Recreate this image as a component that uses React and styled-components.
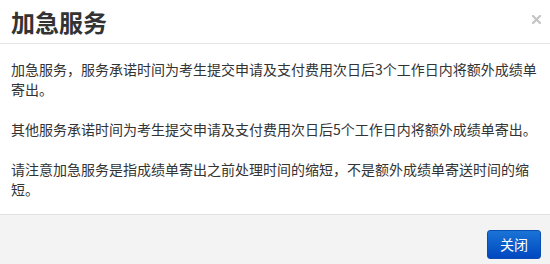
import React from 'react';
import styled, { createGlobalStyle } from 'styled-components';

const GlobalStyle = createGlobalStyle`
  html, body {
    margin: 0;
    padding: 0;
    background: #fff;
  }
  body {
    font-family: "Noto Sans CJK SC", "Liberation Sans", sans-serif;
    color: #333;
  }
`;

const Modal = styled.div`
  width: 550px;
  height: 264px;
  display: flex;
  flex-direction: column;
  overflow: hidden;
  background: #fff;
`;

const Header = styled.div`
  height: 43px;
  display: flex;
  align-items: center;
  justify-content: space-between;
  padding: 0 9px 0 11px;
  border-bottom: 1px solid #e5e5e5;
  box-sizing: content-box;
`;

const Title = styled.h3`
  margin: 0;
  font-size: 24px;
  font-weight: 700;
  line-height: 1;
  color: #333;
`;

const Close = styled.button`
  border: 0;
  background: none;
  padding: 0;
  margin-top: -4px;
  width: 10px;
  height: 10px;
  cursor: pointer;
  display: flex;
  align-items: center;
  justify-content: center;
`;

const Body = styled.div`
  padding: 15px 9px 15px 11px;
  font-size: 14px;
  line-height: 20px;
  color: #333;
`;

const Paragraph = styled.p`
  margin: 0;
  & + & {
    margin-top: 20px;
  }
`;

const Footer = styled.div`
  flex: 1;
  display: flex;
  justify-content: flex-end;
  align-items: flex-start;
  padding: 15px 9px 0 11px;
  background: #f3f3f3;
  border-top: 1px solid #e0e0e0;
`;

const Button = styled.button`
  height: 29px;
  padding: 0 12px;
  font-family: inherit;
  font-size: 14px;
  line-height: 27px;
  color: #fff;
  border: 1px solid #0a4db3;
  border-radius: 3px;
  background: linear-gradient(to bottom, #1a74d6, #0047c0);
  cursor: pointer;
`;

export default function App() {
  return (
    <>
      <GlobalStyle />
      <Modal>
        <Header>
          <Title>加急服务</Title>
          <Close aria-label="关闭">
            <svg width="9" height="9" viewBox="0 0 9 9">
              <path d="M1 1L8 8M8 1L1 8" stroke="#c4c4c4" strokeWidth="2.2" strokeLinecap="square" />
            </svg>
          </Close>
        </Header>
        <Body>
          <Paragraph>加急服务，服务承诺时间为考生提交申请及支付费用次日后3个工作日内将额外成绩单寄出。</Paragraph>
          <Paragraph>其他服务承诺时间为考生提交申请及支付费用次日后5个工作日内将额外成绩单寄出。</Paragraph>
          <Paragraph>请注意加急服务是指成绩单寄出之前处理时间的缩短，不是额外成绩单寄送时间的缩短。</Paragraph>
        </Body>
        <Footer>
          <Button>关闭</Button>
        </Footer>
      </Modal>
    </>
  );
}
